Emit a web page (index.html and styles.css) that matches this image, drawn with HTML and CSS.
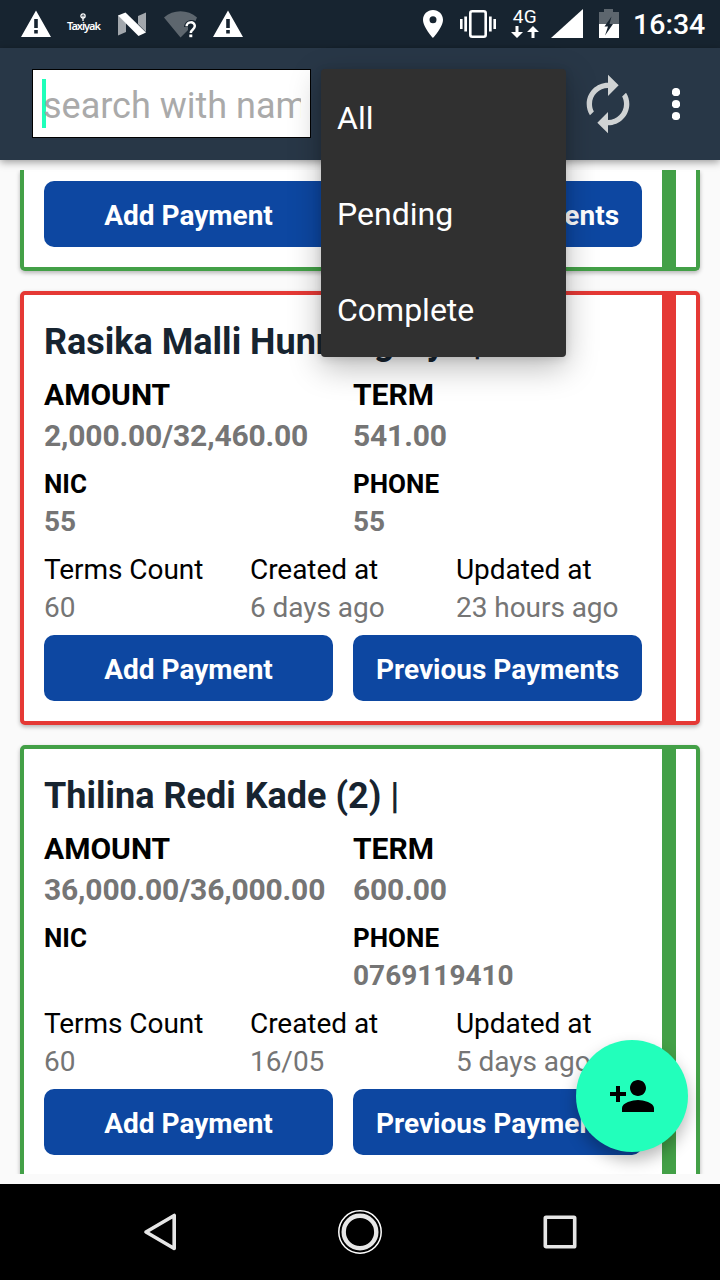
FILE: index.html
```html
<!DOCTYPE html>
<html lang="en">
<head>
<meta charset="utf-8">
<title>Payments</title>
<link rel="stylesheet" href="styles.css">
</head>
<body>
<div class="screen">
  <div class="status">
    <div class="status-left">
      <svg width="30" height="28" viewBox="0 0 30 28"><path fill="#fff" fill-rule="evenodd" d="M15 .5 30 27H0zM13.200 9v9h3.600V9zm0 11v3.400h3.600V20z"/></svg>
      <span class="brand">Taxiyak
        <svg class="brand-pin" width="6" height="9" viewBox="0 0 6 9"><circle cx="3" cy="3" r="2.100" fill="none" stroke="#fff" stroke-width="1.300"/><path d="M3 2.500V8" stroke="#fff" stroke-width="1.300"/></svg>
      </span>
      <svg class="n-logo" width="28" height="24" viewBox="0 0 28 24"><path fill="#a2a7ac" d="M0 3v20.500L8 20V11zM28 .5 20 4v8l8 8z"/><path fill="#fff" d="M0 3.500 7.500.5 28 20.500 20.500 24z"/></svg>
      <svg class="wifi" width="34" height="27" viewBox="0 0 34 27"><path fill="#5d666e" d="M0 6.500C9-1.700 24-1.700 33 6.500L31.500 10C27 7.500 20.500 9.500 20 16h4v3l-7.500 7.500z"/><path fill="none" stroke="#fff" stroke-width="2.500" d="M22.600 15.300c0-5.200 8.200-5.200 8.200-.2 0 3.500-4 3.200-4 7"/><path fill="#fff" d="M25.300 23.500h3v2.700h-3z"/></svg>
      <svg class="warn2" width="30" height="28" viewBox="0 0 30 28"><path fill="#fff" fill-rule="evenodd" d="M15 .5 30 27H0zM13.200 9v9h3.600V9zm0 11v3.400h3.600V20z"/></svg>
    </div>
    <div class="status-right">
      <svg width="20" height="28" viewBox="0 0 20 28"><path fill="#fff" fill-rule="evenodd" d="M10 0C4.400 0 0 4.400 0 9.800 0 17.200 10 28 10 28s10-10.800 10-18.200C20 4.400 15.600 0 10 0zm0 6.300a3.500 3.500 0 1 1 0 7 3.500 3.500 0 0 1 0-7z"/></svg>
      <svg class="vibrate" width="36" height="28" viewBox="0 0 36 28"><rect x="10.300" y="1.300" width="15.400" height="25.400" rx="2" fill="none" stroke="#fff" stroke-width="2.600"/><path fill="#fff" d="M0 9h2.600v10H0zM4.300 6.500H7v15H4.300zM29 6.500h2.700v15H29zM33.400 9H36v10h-2.600z"/></svg>
      <span class="net"><span>4G</span>
        <svg width="28" height="12" viewBox="0 0 28 12"><path fill="#fff" d="M4.500 0h3v6H12l-6 6-6-6h4.500zM20.500 12h3V6H28l-6-6-6 6h4.500z"/></svg>
      </span>
      <svg class="signal" width="32" height="29" viewBox="0 0 32 29"><path fill="#fff" d="M32 0v29H0z"/></svg>
      <svg class="battery" width="20" height="29" viewBox="0 0 20 29"><path fill="#5d666e" d="M0 3h5V0h9v3h6v12H0z"/><path fill="#fff" d="M0 15h20v14H0z"/><path fill="#172430" d="M12.500 7.500 5.500 17.500h3.500L6 26.500 14 15h-3.500z"/></svg>
      <span class="time">16:34</span>
    </div>
  </div>

  <div class="appbar">
    <div class="search"><span class="caret"></span><span class="hint">search with name</span></div>
    <div class="actions">
      <svg class="sync" width="64" height="64" viewBox="0 0 24 24"><path fill="#d0d3d4" d="M12 6v3l4-4-4-4v3c-4.420 0-8 3.580-8 8 0 1.570.460 3.030 1.240 4.260L6.700 14.800c-.450-.830-.700-1.790-.700-2.800 0-3.310 2.690-6 6-6zm6.760 1.740L17.300 9.200c.440.840.700 1.790.700 2.800 0 3.310-2.690 6-6 6v-3l-4 4 4 4v-3c4.420 0 8-3.580 8-8 0-1.570-.460-3.030-1.240-4.260z"/></svg>
      <svg width="8" height="32" viewBox="0 0 8 32"><g fill="#fff"><circle cx="4" cy="4" r="4.100"/><circle cx="4" cy="16" r="4.100"/><circle cx="4" cy="28" r="4.100"/></g></svg>
    </div>
  </div>

  <div class="content">
    <div class="list">
      <div class="card green cut">
        <div class="body">
          <div class="two buttons"><div class="btn">Add Payment</div><div class="btn">Previous Payments</div></div>
        </div>
        <div class="stripe"></div>
      </div>

      <div class="card red">
        <div class="body">
          <div class="name">Rasika Malli Hunnasgiriya |</div>
          <div class="two money">
            <div><div class="label">AMOUNT</div><div class="value">2,000.00/32,460.00</div></div>
            <div><div class="label">TERM</div><div class="value">541.00</div></div>
          </div>
          <div class="two ident">
            <div><div class="label">NIC</div><div class="value">55</div></div>
            <div><div class="label">PHONE</div><div class="value">55</div></div>
          </div>
          <div class="three">
            <div><div>Terms Count</div><div class="muted">60</div></div>
            <div><div>Created at</div><div class="muted">6 days ago</div></div>
            <div><div>Updated at</div><div class="muted">23 hours ago</div></div>
          </div>
          <div class="two buttons"><div class="btn">Add Payment</div><div class="btn">Previous Payments</div></div>
        </div>
        <div class="stripe"></div>
      </div>

      <div class="card green">
        <div class="body">
          <div class="name">Thilina Redi Kade (2) |</div>
          <div class="two money">
            <div><div class="label">AMOUNT</div><div class="value">36,000.00/36,000.00</div></div>
            <div><div class="label">TERM</div><div class="value">600.00</div></div>
          </div>
          <div class="two ident">
            <div><div class="label">NIC</div><div class="value"></div></div>
            <div><div class="label">PHONE</div><div class="value">0769119410</div></div>
          </div>
          <div class="three">
            <div><div>Terms Count</div><div class="muted">60</div></div>
            <div><div>Created at</div><div class="muted">16/05</div></div>
            <div><div>Updated at</div><div class="muted">5 days ago</div></div>
          </div>
          <div class="two buttons"><div class="btn">Add Payment</div><div class="btn">Previous Payments</div></div>
        </div>
        <div class="stripe"></div>
      </div>
    </div>
  </div>

  <div class="nav">
    <svg width="40" height="44" viewBox="0 0 40 44"><path d="M34.200 5.500v33L6 22z" fill="none" stroke="#e6e6e6" stroke-width="3.600" stroke-linejoin="round"/></svg>
    <svg width="44" height="44" viewBox="0 0 44 44"><circle cx="22" cy="22" r="21.200" fill="none" stroke="#fff" stroke-width="1.500"/><circle cx="22" cy="22" r="16.300" fill="none" stroke="#e6e6e6" stroke-width="4.400"/></svg>
    <svg width="40" height="44" viewBox="0 0 40 44"><rect x="5.300" y="7.300" width="29.400" height="29.400" rx=".8" fill="none" stroke="#e6e6e6" stroke-width="3.600"/></svg>
  </div>

  <div class="menu">
    <div>All</div><div>Pending</div><div>Complete</div>
  </div>
  <div class="fab">
    <svg width="48" height="48" viewBox="0 0 24 24"><path d="M15 12c2.210 0 4-1.790 4-4s-1.790-4-4-4-4 1.790-4 4 1.790 4 4 4zm-9-2V7H4v3H1v2h3v3h2v-3h3v-2H6zm9 4c-2.670 0-8 1.340-8 4v2h16v-2c0-2.660-5.330-4-8-4z"/></svg>
  </div>
</div>
</body>
</html>
```

FILE: styles.css
```css
* { box-sizing: border-box; }
body { margin: 0; font-family: Roboto, "Noto Sans", sans-serif; color: #000; background: #fafafa; }
svg { display: block; flex: none; }
.screen { position: relative; width: 720px; height: 1280px; overflow: hidden; display: flex; flex-direction: column; }

.status { height: 48px; flex: none; background: #172430; display: flex; justify-content: space-between; padding: 0 17px 0 21px; color: #fff; }
.status-left, .status-right { display: flex; align-items: center; }
.brand { position: relative; width: 34px; margin-left: 16px; font: 600 11px/14px "Noto Sans", sans-serif; letter-spacing: -1px; white-space: nowrap; padding-top: 3px; }
.brand-pin { position: absolute; left: 13px; top: -3px; }
.n-logo { margin-left: 17px; }
.wifi { margin-left: 18px; }
.warn2 { margin-left: 15px; }
.vibrate { margin-left: 17px; }
.net { width: 28px; margin-left: 15px; display: flex; flex-direction: column; align-items: center; font-size: 19px; line-height: 16px; letter-spacing: .5px; gap: 1px; padding-bottom: 1px; }
.signal { margin-left: 12px; margin-bottom: 1px; }
.battery { margin-left: 16px; margin-bottom: 1px; }
.time { width: 70px; margin-left: 14px; font-size: 28.5px; font-weight: 500; line-height: 48px; white-space: nowrap; padding-top: 2px; }

.appbar { position: relative; height: 112px; flex: none; background: #283747; display: flex; justify-content: space-between; padding: 21px 40px 0 32px; box-shadow: 0 2px 8px rgba(0,0,0,.4); }
.search { position: relative; width: 279px; height: 69px; background: #fff; border: 1px solid #000; padding: 0 9px 0 10px; }
.caret { position: absolute; left: 9px; top: 9px; width: 4px; height: 49px; background: #1fffba; }
.hint { position: relative; display: block; overflow: hidden; white-space: nowrap; color: #aaa; font-size: 36px; line-height: 73px; height: 67px; }
.actions { display: flex; gap: 32px; align-items: center; height: 70px; }
.sync { margin-bottom: 1px; }

.content { height: 1024px; flex: none; padding: 10px 0; background: #fafafa; }
.list { height: 1004px; overflow: hidden; padding: 0 20px; display: flex; flex-direction: column; gap: 20px; }
.card { height: 434px; flex: none; background: #fff; border: 4px solid; border-radius: 5px; display: flex; padding-right: 20px; box-shadow: 0 2px 4px rgba(0,0,0,.28); }
.card.cut { height: 101px; border-top: 0; border-top-left-radius: 0; border-top-right-radius: 0; }
.green { border-color: #43a047; color: #43a047; }
.red { border-color: #e53935; color: #e53935; }
.stripe { width: 14px; background: currentColor; }
.body { flex: 1; padding: 20px; color: #000; }
.cut .body { padding-top: 11px; }
.name { padding-top: 1px; font-size: 36px; font-weight: 700; line-height: 53px; color: #172430; white-space: nowrap; }
.two { display: grid; grid-template-columns: 1fr 1fr; gap: 20px; }
.three { display: grid; grid-template-columns: repeat(3, 1fr); gap: 20px; margin-top: 10px; font-size: 28px; line-height: 38px; letter-spacing: -.05px; white-space: nowrap; }
.money { margin-top: 5px; font-size: 30px; line-height: 41px; font-weight: 700; }
.money .value { letter-spacing: -.16px; }
.ident { margin-top: 9px; font-size: 28px; line-height: 38px; font-weight: 700; }
.ident .label { font-size: 26px; }
.value { color: #757575; }
.ident .value { min-height: 38px; }
.muted { color: #757575; }
.buttons { margin-top: 8px; }
.cut .buttons { margin-top: 0; }
.btn { height: 66px; border-radius: 10px; background: #0d47a1; color: #fff; font-size: 28px; font-weight: 700; line-height: 70px; text-align: center; white-space: nowrap; }

.nav { height: 96px; flex: none; background: #000; display: flex; align-items: center; justify-content: space-between; padding: 0 140px; }

.menu { position: absolute; left: 321px; top: 69px; width: 245px; height: 288px; border-radius: 4px; background: #303030; color: #fff; font-size: 32px; line-height: 96px; padding: 1px 0 0 16px; box-shadow: 0 10px 32px rgba(0,0,0,.28), 0 2px 8px rgba(0,0,0,.12); }
.fab { position: absolute; left: 576px; top: 1040px; width: 112px; height: 112px; border-radius: 50%; background: #22ffbb; display: flex; align-items: center; justify-content: center; box-shadow: 0 8px 16px rgba(0,0,0,.28); }
```
